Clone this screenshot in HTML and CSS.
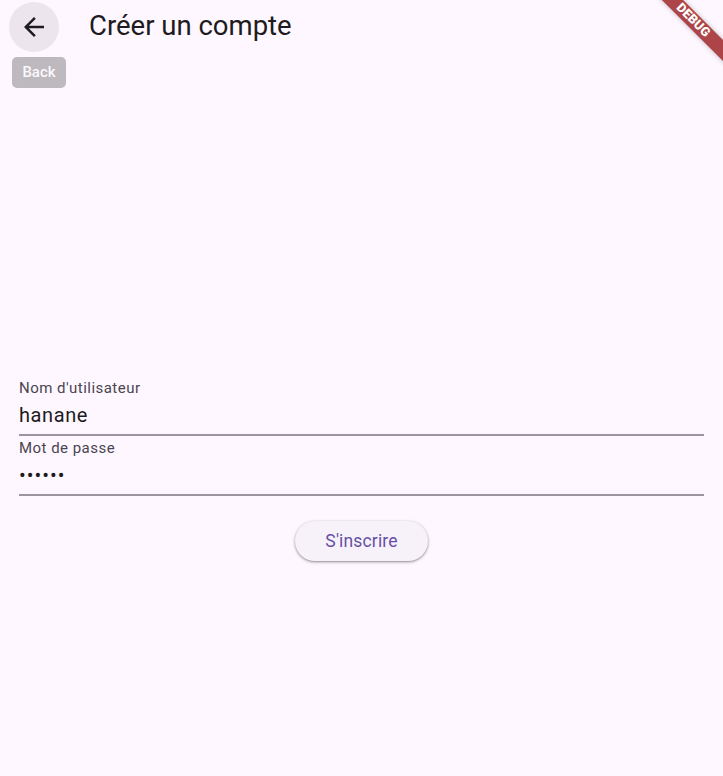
FILE: index.html
```html
<!DOCTYPE html>
<html lang="fr">
<head>
<meta charset="utf-8">
<title>Créer un compte</title>
<link rel="stylesheet" href="styles.css">
</head>
<body>
<div class="page">
  <header class="appbar">
    <button class="back-btn" aria-label="Back">
      <svg class="back-icon" viewBox="0 0 24 24" width="30" height="30"><path d="M20 11H7.83l5.59-5.59L12 4l-8 8 8 8 1.41-1.41L7.83 13H20v-2z"/></svg>
    </button>
    <h1 class="title">Créer un compte</h1>
  </header>
  <div class="tooltip">Back</div>

  <main class="form">
    <div class="field">
      <div class="field-label">Nom d'utilisateur</div>
      <div class="field-input">hanane</div>
      <div class="field-line"></div>
    </div>
    <div class="field">
      <div class="field-label">Mot de passe</div>
      <div class="field-input dots">••••••</div>
      <div class="field-line"></div>
    </div>
    <div class="actions">
      <button class="submit">S'inscrire</button>
    </div>
  </main>

  <div class="debug-banner"><span>DEBUG</span></div>
</div>
</body>
</html>
```
FILE: styles.css
```css
html, body {
  margin: 0;
  padding: 0;
}
body {
  background: #fef7ff;
  font-family: Roboto, "Liberation Sans", sans-serif;
  color: #1d1b20;
  width: 723px;
  height: 776px;
  overflow: hidden;
}
.page {
  position: relative;
  width: 723px;
  height: 776px;
  overflow: hidden;
}
.appbar {
  display: flex;
  align-items: center;
  height: 50px;
  padding-top: 2px;
  padding-bottom: 2px;
}
.back-btn {
  width: 50px;
  height: 50px;
  margin-left: 9px;
  border: none;
  border-radius: 50%;
  background: #ece5ed;
  display: flex;
  align-items: center;
  justify-content: center;
  padding: 0;
}
.back-icon {
  fill: #1d1b20;
}
.title {
  margin: 0 0 3px 30px;
  font-size: 27.5px;
  font-weight: 400;
  line-height: normal;
  color: #1d1b20;
}
.tooltip {
  position: absolute;
  left: 12px;
  top: 57px;
  width: 54px;
  height: 31px;
  border-radius: 5px;
  background: #bdb9be;
  color: #fbf8fc;
  font-size: 15px;
  font-weight: 500;
  line-height: 31px;
  text-align: center;
}
.form {
  margin-top: 322px;
  padding: 0 19px;
}
.field {
  padding-top: 2.5px;
}
.field-label {
  font-size: 15px;
  line-height: 18px;
  letter-spacing: 0.47px;
  color: #49454f;
}
.field-input {
  margin-top: 6px;
  font-size: 20px;
  line-height: 24px;
  letter-spacing: 0.6px;
  color: #1d1b20;
}
.dots {
  letter-spacing: 1px;
}
.field-line {
  margin-top: 7.5px;
  height: 2px;
  background: #9a959e;
}
.actions {
  display: flex;
  justify-content: center;
  margin-top: 24.5px;
}
.submit {
  height: 40px;
  padding: 0 30px;
  border: none;
  border-radius: 20px;
  background: #f7f2fa;
  color: #6750a4;
  font-family: Roboto, "Liberation Sans", sans-serif;
  font-size: 17.5px;
  font-weight: 400;
  letter-spacing: 0.15px;
  box-shadow: 0 1px 2px rgba(0, 0, 0, 0.3), 0 1px 3px 1px rgba(0, 0, 0, 0.12);
}
.debug-banner {
  position: absolute;
  left: 638px;
  top: 13px;
  width: 110px;
  height: 15px;
  background: #ad4548;
  transform: rotate(45deg);
  box-shadow: 0 0 5px rgba(0, 0, 0, 0.25);
  display: flex;
  align-items: center;
  justify-content: center;
}
.debug-banner span {
  color: #ffffff;
  font-size: 12.75px;
  font-weight: 900;
  line-height: 1;
  letter-spacing: 0.2px;
}
```
